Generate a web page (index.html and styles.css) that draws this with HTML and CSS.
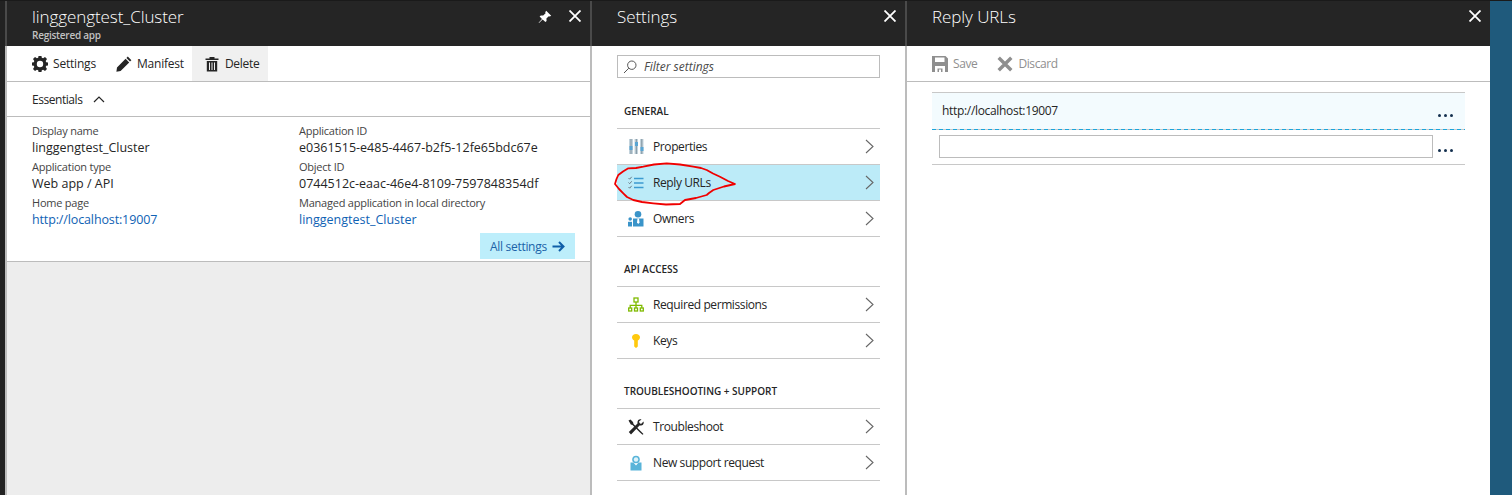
FILE: index.html
```html
<!DOCTYPE html>
<html lang="en">
<head>
<meta charset="utf-8">
<title>Reply URLs</title>
<link rel="stylesheet" href="styles.css">
</head>
<body>
<div class="app">
  <div class="edge"></div>
  <section class="blade blade-wide">
    <header class="head">
      <div class="head-text">
        <h1 class="title">linggengtest_Cluster</h1>
        <div class="subtitle">Registered app</div>
      </div>
      <svg class="pin" viewBox="0 0 14 14"><path fill="#fff" d="M8.200 0.800 13.200 5.800 11.800 6.600 10.800 6.200 8.400 8.600 8.600 11 7.400 12 4.600 9.400 1 13 0.600 12.800 4 9 1.600 6.400 2.800 5.400 5.200 5.600 7.600 3.200 7.200 2.200Z"/></svg>
      <svg class="close" viewBox="0 0 12 12"><path d="M0.500 0.500 11.500 11.500M11.500 0.500 0.500 11.500"/></svg>
    </header>
    <div class="body">
      <div class="toolbar">
        <div class="cmd">
          <svg class="cmd-icon" viewBox="0 0 16 16"><path fill="#252525" fill-rule="evenodd" d="M6.600 0h2.800l.4 2.200 1.300.6L13 1.500l2 2-1.300 1.900.5 1.300L16.400 7.100v2.800l-2.200.4-.5 1.300 1.300 1.900-2 2-1.900-1.300-1.300.5-.4 2.200H6.600l-.4-2.200-1.300-.5-1.900 1.300-2-2 1.300-1.900-.5-1.300L-.4 9.900V7.100l2.200-.4.500-1.300L1 3.500l2-2 1.900 1.300 1.300-.6zM8 5.300a3.200 3.200 0 1 0 0 6.400 3.200 3.200 0 0 0 0-6.400z" transform="translate(0 -.5)"/></svg>
          <span>Settings</span>
        </div>
        <div class="cmd">
          <svg class="cmd-icon" viewBox="0 0 16 16"><path fill="#252525" d="M11.800 0.600 15.400 4.200 14 5.600 10.400 2ZM9.600 2.800 13.200 6.400 4.600 15 0.400 15.800 1 11.400Z"/></svg>
          <span>Manifest</span>
        </div>
        <div class="cmd cmd-active">
          <svg class="cmd-icon" viewBox="0 0 16 16"><path fill="#252525" fill-rule="evenodd" d="M1.500 2.500h4V1h5v1.500h4V4h-13zM2.800 5h10.400v10.500H2.800zM5 6.500v7.500h1V6.500zM7.500 6.500v7.500h1V6.500zM10 6.500v7.500h1V6.500z"/></svg>
          <span>Delete</span>
        </div>
      </div>
      <div class="essentials">
        <span>Essentials</span>
        <svg class="caret" viewBox="0 0 12 7"><path d="M1 6 6 1 11 6"/></svg>
      </div>
      <div class="details">
        <dl class="grid">
          <div><dt>Display name</dt><dd>linggengtest_Cluster</dd></div>
          <div><dt>Application ID</dt><dd>e0361515-e485-4467-b2f5-12fe65bdc67e</dd></div>
          <div><dt>Application type</dt><dd>Web app / API</dd></div>
          <div><dt>Object ID</dt><dd>0744512c-eaac-46e4-8109-7597848354df</dd></div>
          <div><dt>Home page</dt><dd class="link link-tight">http://localhost:19007</dd></div>
          <div><dt>Managed application in local directory</dt><dd class="link">linggengtest_Cluster</dd></div>
        </dl>
        <div class="all-row">
          <div class="all-btn">
            <span>All settings</span>
            <svg class="arrow" viewBox="0 0 13 11"><path d="M0.500 5.500H11M7 1 11.500 5.500 7 10"/></svg>
          </div>
        </div>
      </div>
      <div class="filler"></div>
    </div>
  </section>

  <section class="blade blade-mid">
    <header class="head">
      <div class="head-text"><h1 class="title">Settings</h1></div>
      <svg class="close" viewBox="0 0 12 12"><path d="M0.500 0.500 11.500 11.500M11.500 0.500 0.500 11.500"/></svg>
    </header>
    <div class="body settings">
      <div class="filter">
        <svg class="search" viewBox="0 0 14 14"><circle cx="8.800" cy="5.200" r="4.200"/><path d="M5.800 8.200 1 13"/></svg>
        <span>Filter settings</span>
      </div>
      <h2 class="group first">GENERAL</h2>
      <ul class="menu">
        <li>
          <svg class="mi" viewBox="0 0 16 16"><path fill="#c3d3dc" d="M1 0h4v15H1zM6.500 0h3.500v15H6.500zM12 0h3.500v15H12z"/><path fill="#7f929e" d="M2.500 0h1v15h-1zM7.800 0h1v15h-1zM13.300 0h1v15h-1z"/><path fill="#59a5d3" d="M1.500 7h3v4h-3zM7 3h3v4H7zM12.500 8h3v4h-3z"/></svg>
          <span class="ml">Properties</span>
          <svg class="chev" viewBox="0 0 9 15"><path d="M1 1 8 7.500 1 14"/></svg>
        </li>
        <li class="selected">
          <svg class="mi" viewBox="0 0 16 16"><path fill="none" stroke="#3c9bd0" stroke-width="1.300" d="M6 3.500h9.500M6 8h9.500M6 12.500h9.500"/><path fill="none" stroke="#6a7a85" d="M0.500 3l1.200 1.200 2-2.400M0.500 7.500l1.200 1.200 2-2.400M0.500 12l1.200 1.200 2-2.400"/></svg>
          <span class="ml">Reply URLs</span>
          <svg class="chev" viewBox="0 0 9 15"><path d="M1 1 8 7.500 1 14"/></svg>
        </li>
        <li>
          <svg class="mi" viewBox="0 0 16 16"><circle cx="10" cy="3.300" r="3.300" fill="#3a94c9"/><path fill="#3a94c9" d="M5 7.500h10.500V15.500H5z"/><circle cx="2.200" cy="8" r="1.800" fill="#3a94c9"/><path fill="#3a94c9" d="M0 10.800h4V15.500H0z"/><path fill="#fff" d="M9.500 7.500h1.500l.5 4-1.250 1.500-1.250-1.500z"/></svg>
          <span class="ml">Owners</span>
          <svg class="chev" viewBox="0 0 9 15"><path d="M1 1 8 7.500 1 14"/></svg>
        </li>
      </ul>
      <h2 class="group">API ACCESS</h2>
      <ul class="menu">
        <li>
          <svg class="mi" viewBox="0 0 16 16"><g fill="none" stroke="#7fba00" stroke-width="1.300"><rect x="6" y="1" width="4" height="4"/><rect x="0.700" y="11" width="3" height="3"/><rect x="6.500" y="11" width="3" height="3"/><rect x="12.300" y="11" width="3" height="3"/><path d="M8 5v6M2.200 11V8.300H13.800V11"/></g></svg>
          <span class="ml">Required permissions</span>
          <svg class="chev" viewBox="0 0 9 15"><path d="M1 1 8 7.500 1 14"/></svg>
        </li>
        <li>
          <svg class="mi" viewBox="0 0 16 16"><path fill="#ffc90e" d="M8 1c2.400 0 4 1.500 4 3.300 0 1.600-1 2.800-2.200 3.200v6L8 15l-1.800-1.500V7.500C5 7.100 4 5.900 4 4.300 4 2.500 5.600 1 8 1z"/></svg>
          <span class="ml">Keys</span>
          <svg class="chev" viewBox="0 0 9 15"><path d="M1 1 8 7.500 1 14"/></svg>
        </li>
      </ul>
      <h2 class="group">TROUBLESHOOTING + SUPPORT</h2>
      <ul class="menu">
        <li>
          <svg class="mi" viewBox="0 0 16 16"><path fill="#252525" d="M0.500 1.500 2.500 0.500 5 3 5.500 5 13 12.500 15.500 15 14.500 15.800 12 13.500 4.500 6 2.800 5.500Z"/><path fill="#252525" d="M15.500 2.500 13 5 11.500 4 11 2.500 13.500 0.500C11.500-.3 9.500 1 9.500 3L9.500 4.500 0.800 13 3 15.500 11.500 6.500H13C15 6.500 16.200 4.500 15.500 2.500Z"/></svg>
          <span class="ml">Troubleshoot</span>
          <svg class="chev" viewBox="0 0 9 15"><path d="M1 1 8 7.500 1 14"/></svg>
        </li>
        <li>
          <svg class="mi" viewBox="0 0 16 16"><path fill="#59b4d9" d="M2.500 7.500h3L8 10.500l2.500-3h3V15.500h-11z"/><circle cx="8" cy="4.500" r="3.800" fill="#59b4d9"/><circle cx="8" cy="4.500" r="2.200" fill="#dff3fa"/></svg>
          <span class="ml">New support request</span>
          <svg class="chev" viewBox="0 0 9 15"><path d="M1 1 8 7.500 1 14"/></svg>
        </li>
      </ul>
    </div>
  </section>

  <section class="blade blade-wide">
    <header class="head">
      <div class="head-text"><h1 class="title">Reply URLs</h1></div>
      <svg class="close" viewBox="0 0 12 12"><path d="M0.500 0.500 11.500 11.500M11.500 0.500 0.500 11.500"/></svg>
    </header>
    <div class="body">
      <div class="toolbar">
        <div class="cmd cmd-off">
          <svg class="cmd-icon" viewBox="0 0 16 16"><path fill="#8f8f8f" fill-rule="evenodd" d="M0 0h13.500L16 2.500V16H0zM3 1.500V6h9.500V1.500zM3 10v6h2.500v-3.500h5V16H13v-6zM7 13.500h2V16H7z"/></svg>
          <span>Save</span>
        </div>
        <div class="cmd cmd-off">
          <svg class="cmd-icon" viewBox="0 0 14 14"><path fill="none" stroke="#8f8f8f" stroke-width="3" d="M1.500 1.500 12.500 12.500M12.500 1.500 1.500 12.500"/></svg>
          <span>Discard</span>
        </div>
      </div>
      <div class="urls">
        <div class="url-row url-filled">
          <span class="url-text">http://localhost:19007</span>
          <span class="dots"><i></i><i></i><i></i></span>
        </div>
        <div class="url-row url-new">
          <input class="url-input" type="text" aria-label="Reply URL">
          <span class="dots"><i></i><i></i><i></i></span>
        </div>
      </div>
    </div>
  </section>
  <div class="rail"></div>
</div>
<svg class="mark" viewBox="0 0 123 44"><path d="M1 22 2.500 17 4.300 13 9 9.500 14.300 6.300 22 6 29.300 4.700 40 2.500 52.700 1.300 66 2.500 79.300 4.700 87 6 92.700 8 99 11.500 106 14.700 114 19 121 22 110 24.500 99.300 28 95 31 92.700 33 82 36 71 38 66 42 52 42.500 39.300 41.300 28 40 19.300 38 13 35 9.300 31.300 5 27Z"/></svg>
</body>
</html>
```
FILE: styles.css
```css
* { box-sizing: border-box; }
html, body { margin: 0; padding: 0; }
body {
  position: relative;
  width: 1512px;
  height: 495px;
  overflow: hidden;
  font-family: "Open Sans", "Noto Sans", sans-serif;
  font-size: 12px;
  color: #252525;
  background: #1e1e1e;
}
.app { display: flex; height: 495px; padding-top: 1px; background: #1a1a1a; }
.edge { width: 5px; background: #222; }
.rail { width: 22px; background: #1f5a7c; }
.blade { display: flex; flex-direction: column; flex: none; }
.blade-wide { width: 585px; }
.blade-mid { width: 315px; }

.head {
  display: flex;
  align-items: flex-start;
  height: 45px;
  padding: 0 9px 0 25px;
  background: #252525;
  border-left: 2px solid #4a4a4a;
  color: #fff;
}
.head-text { flex: 1; }
.title { margin: 4px 0 0; font-size: 17px; line-height: 24px; font-weight: 300; letter-spacing: -0.08px; }
.subtitle { font-size: 10px; line-height: 13px; font-weight: 600; color: #c2c2c2; letter-spacing: -0.25px; }
.pin { width: 14px; height: 14px; margin: 9px 17px 0 0; }
.close { width: 12px; height: 12px; margin-top: 9px; }
.close path { fill: none; stroke: #fff; stroke-width: 1.800; }

.body { flex: 1; display: flex; flex-direction: column; background: #fff; border-left: 2px solid #bcbcbc; }

.toolbar { display: flex; height: 36px; padding-left: 15px; border-bottom: 1px solid #bcbcbc; flex: none; }
.cmd { display: flex; align-items: center; gap: 5px; height: 35px; padding: 0 10px; letter-spacing: -0.2px; }
.cmd-active { background: #f0f0f0; padding: 0 9px 0 12px; margin-left: -2px; letter-spacing: -0.3px; }
.cmd-off { color: #8f8f8f; letter-spacing: -0.4px; }
.cmd-icon { width: 16px; height: 16px; }

.essentials { display: flex; align-items: center; gap: 11px; height: 35px; padding-left: 25px; border-bottom: 1px solid #bcbcbc; letter-spacing: -0.45px; flex: none; }
.caret { width: 12px; height: 7px; }
.caret path { fill: none; stroke: #252525; stroke-width: 1.200; }

.details { height: 145px; padding: 6px 15px 0 25px; border-bottom: 1px solid #bcbcbc; flex: none; }
.grid { display: grid; grid-template-columns: 267px 1fr; margin: 0; }
.grid > div { height: 36px; }
.grid dt { font-size: 11px; line-height: 16px; color: #444; letter-spacing: -0.23px; }
.grid dd { margin: 0; font-size: 12.500px; line-height: 18px; letter-spacing: 0; }
.grid .link { color: #0f62b4; }
.grid .link-tight { letter-spacing: -0.13px; }
.all-row { display: flex; justify-content: flex-end; margin-top: 2px; }
.all-btn { display: flex; align-items: center; gap: 5px; height: 26px; width: 95px; padding-left: 10px; background: #bdeefb; color: #1b63a8; letter-spacing: -0.3px; }
.arrow { width: 13px; height: 11px; }
.arrow path { fill: none; stroke: #0f5ea8; stroke-width: 2; }
.filler { flex: 1; background: #ededed; }

.settings { padding: 9px 25px 0; }
.filter { display: flex; align-items: center; gap: 7px; height: 23px; padding-left: 5px; border: 1px solid #bcbcbc; font-style: italic; color: #4a4a4a; letter-spacing: 0; flex: none; }
.search { width: 14px; height: 14px; }
.search circle, .search path { fill: none; stroke: #555; stroke-width: 1; }
.group { margin: 0; height: 49px; padding: 24px 0 0 7px; font-size: 10px; line-height: 16px; font-weight: 600; color: #252525; letter-spacing: -0.02px; }
.group.first { height: 50px; padding-top: 25px; }
.menu { list-style: none; margin: 0; padding: 0; border-top: 1px solid #c8c8c8; }
.menu li { display: flex; align-items: center; height: 36px; padding: 0 6px 0 11px; border-bottom: 1px solid #c8c8c8; letter-spacing: -0.4px; }
.menu li.selected { background: #bcebf8; }
.mi { width: 16px; height: 16px; flex: none; }
.ml { flex: 1; margin-left: 9px; }
.chev { width: 9px; height: 15px; }
.chev path { fill: none; stroke: #666; stroke-width: 1.100; }

.urls { padding: 10px 25px 0; }
.url-row { display: flex; width: 533px; justify-content: space-between; }
.url-filled {
  height: 38px;
  border-top: 1px solid #c8c8c8;
  padding: 0 12px 2px 10px;
  align-items: center;
  background: linear-gradient(90deg, #1aa5dc 0 4px, #c8c8c8 4px 7px) left bottom / 7px 1px repeat-x, #f3fbfe;
}
.url-text { letter-spacing: -0.32px; }
.url-new { height: 35px; border-bottom: 1px solid #c8c8c8; padding: 5px 12px 0 7px; align-items: flex-start; }
.url-input { width: 494px; height: 23px; padding: 0; border: 1px solid #bcbcbc; background: #fff; }
.dots { display: flex; gap: 3px; align-self: flex-end; margin-bottom: 12px; }
.url-filled .dots { margin-bottom: 11px; }
.dots i { display: block; width: 3px; height: 3px; border-radius: 50%; background: #14304f; }

.mark { position: absolute; left: 614px; top: 162px; width: 123px; height: 44px; }
.mark path { fill: none; stroke: #f00000; stroke-width: 1.800; stroke-linejoin: round; }
```
